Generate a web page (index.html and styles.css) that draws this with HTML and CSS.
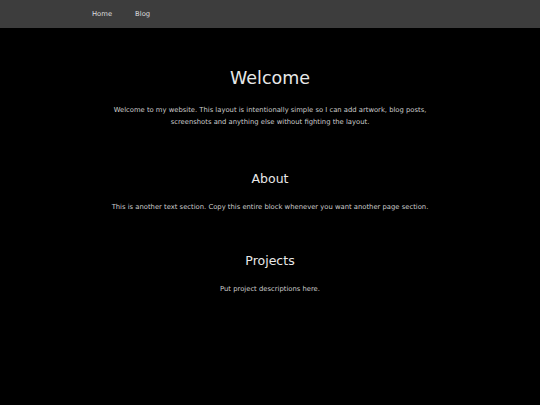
FILE: index.html
```html
<!DOCTYPE html>
<html>

<head>
	<meta charset="UTF-8">
	<title>My Website</title>
	<link rel="stylesheet" href="styles.css">
</head>

<body>
	<div id="nav">
		<div class="wrap">
			<a href="index.html">Home</a>
			<a href="blog.html">Blog</a>
		</div>
	</div>

	<div id="content">
		<div class="section intro">
			<h1>Welcome</h1>
			<p>Welcome to my website. This layout is intentionally simple so I can add artwork, blog posts, screenshots and anything else without fighting the layout.</p>
		</div>

		<!-- copy this block for a new section -->
		<div class="section">
			<h2>About</h2>
			<p>This is another text section. Copy this entire block whenever you want another page section.</p>
		</div>

		<div class="section">
			<h2>Projects</h2>
			<p>Put project descriptions here.</p>
		</div>
	</div>
</body>

</html>
```

FILE: styles.css
```css
html,
body {
	width: 100%;
	height: 100%;
	margin: 0;
}

body {
	background: #000;
	color: #cccccc;
	font-family: "DejaVu Sans", Verdana, sans-serif;
}

a {
	text-decoration: none;
	color: #dddddd;
}

#nav {
	background: #3d3d3d;
	height: 28px;
}

#nav .wrap {
	width: 356px;
	margin: 0 auto;
	display: flex;
	align-items: center;
	gap: 23px;
	height: 100%;
}

#nav a {
	font-size: 6.8px;
	line-height: 12px;
}

#content {
	width: 330px;
	margin: 0 auto;
	padding-top: 40px;
	display: flex;
	flex-direction: column;
	gap: 40px;
	text-align: center;
}

.intro {
	margin-bottom: 2.5px;
}

h1 {
	font-weight: normal;
	font-size: 17.5px;
	line-height: 21px;
	margin: 0 0 15px;
	color: #e8e8e8;
}

h2 {
	font-weight: normal;
	font-size: 12.5px;
	line-height: 15px;
	margin: 0 0 15px;
	color: #e8e8e8;
}

p {
	margin: 0;
	font-size: 6.8px;
	line-height: 12px;
}
```
